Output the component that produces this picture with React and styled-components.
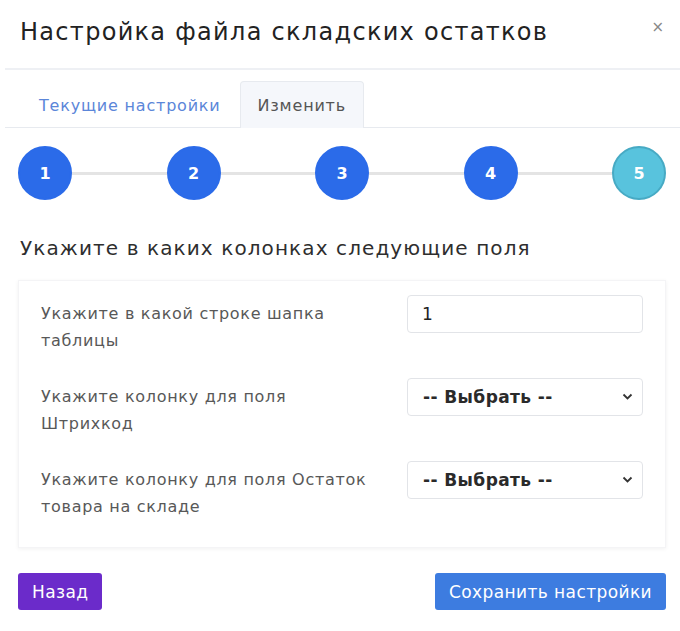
import React from "react";
import styled, { createGlobalStyle } from "styled-components";

const GlobalStyle = createGlobalStyle`
* {
  padding: 0;
  margin: 0;
  box-sizing: border-box;
}
body {
  background: #fff;
  font-family: "DejaVu Sans", "Noto Sans", sans-serif;
}
`;

const Modal = styled.div`
  width: 675px;
  margin-left: 5px;
  background: #fff;
`;

const Header = styled.div`
  display: flex;
  justify-content: space-between;
  align-items: flex-start;
  height: 70px;
  padding: 14px 16px 0 15px;
  border-bottom: 2px solid #eef0f4;
`;

const Title = styled.h1`
  font-size: 24px;
  font-weight: 400;
  letter-spacing: 1.3px;
  color: #222;
  line-height: 36px;
`;

const Close = styled.button`
  border: none;
  background: none;
  color: #888;
  font-size: 15px;
  line-height: 20px;
  margin-top: 3px;
  cursor: pointer;
  font-family: inherit;
`;

const Tabs = styled.div`
  display: flex;
  margin-top: 11px;
  padding-left: 15px;
  border-bottom: 1px solid #e7eaef;
`;

const Tab = styled.div`
  height: 47px;
  padding: 0 ${(p) => (p.active ? "17px" : "18px")};
  display: flex;
  align-items: center;
  font-size: 16px;
  letter-spacing: 0.8px;
  color: ${(p) => (p.active ? "#555" : "#5b86d9")};
  background: ${(p) => (p.active ? "#f5f7fb" : "transparent")};
  border: 1px solid ${(p) => (p.active ? "#e7eaef" : "transparent")};
  border-bottom: none;
  border-radius: 4px 4px 0 0;
  margin-bottom: -1px;
`;

const Stepper = styled.div`
  display: flex;
  align-items: center;
  margin-top: 18px;
  padding: 0 14px 0 13px;
`;

const Step = styled.div`
  width: 54px;
  height: 54px;
  flex-shrink: 0;
  border-radius: 50%;
  display: flex;
  align-items: center;
  justify-content: center;
  font-size: 16px;
  font-weight: 700;
  color: #fff;
  background: ${(p) => (p.current ? "#58c3dd" : "#2b6be9")};
  border: 2px solid ${(p) => (p.current ? "#47aac4" : "#2b6be9")};
`;

const Line = styled.div`
  flex: 1;
  height: 3px;
  background: #e4e4e4;
`;

const Heading = styled.h2`
  margin: 34px 0 0 15px;
  font-size: 20px;
  font-weight: 400;
  letter-spacing: 1.1px;
  color: #2e2e2e;
  line-height: 28px;
`;

const Card = styled.div`
  margin: 18px 14px 0 13px;
  padding: 14px 22px 27px 22px;
  background: #fff;
  box-shadow: 0 1px 4px rgba(0, 0, 0, 0.06);
  border: 1px solid #f4f4f6;
  display: flex;
  flex-direction: column;
  gap: 24px;
`;

const Row = styled.div`
  display: flex;
  justify-content: space-between;
  align-items: flex-start;
`;

const Label = styled.div`
  width: 335px;
  padding-top: 5px;
  font-size: 16px;
  letter-spacing: 0.7px;
  line-height: 27px;
  color: #585858;
`;

const Input = styled.input`
  width: 236px;
  height: 38px;
  border: 1px solid #e2e4e8;
  border-radius: 4px;
  padding: 0 14px;
  font-size: 17px;
  font-family: inherit;
  color: #222;
  font-weight: 500;
  outline: none;
`;

const SelectBox = styled.div`
  position: relative;
  width: 236px;
  height: 38px;
`;

const Select = styled.select`
  appearance: none;
  width: 100%;
  height: 100%;
  border: 1px solid #e2e4e8;
  border-radius: 4px;
  padding: 0 14px 0 15px;
  background: #fff;
  font-size: 17px;
  font-weight: 700;
  letter-spacing: 0.4px;
  font-family: inherit;
  color: #2a2a2a;
  outline: none;
`;

const Chevron = styled.svg`
  position: absolute;
  right: 10px;
  top: 15px;
  pointer-events: none;
`;

const Footer = styled.div`
  display: flex;
  justify-content: space-between;
  margin: 25px 14px 0 13px;
`;

const Button = styled.button`
  height: 37px;
  padding: 0 14px;
  border: none;
  border-radius: 3px;
  color: #fff;
  font-size: 17px;
  letter-spacing: 0.4px;
  font-family: inherit;
  background: ${(p) => p.color};
  cursor: pointer;
`;

const fields = [
  { label: "Укажите в какой строке шапка таблицы", input: true },
  { label: "Укажите колонку для поля Штрихкод" },
  { label: "Укажите колонку для поля Остаток товара на складе" },
];

export default function App() {
  return (
    <>
      <GlobalStyle />
      <Modal>
        <Header>
          <Title>Настройка файла складских остатков</Title>
          <Close>×</Close>
        </Header>
        <Tabs>
          <Tab>Текущие настройки</Tab>
          <Tab active>Изменить</Tab>
        </Tabs>
        <Stepper>
          {[1, 2, 3, 4, 5].map((n) => (
            <React.Fragment key={n}>
              <Step current={n === 5}>{n}</Step>
              {n < 5 && <Line />}
            </React.Fragment>
          ))}
        </Stepper>
        <Heading>Укажите в каких колонках следующие поля</Heading>
        <Card>
          {fields.map((f) => (
            <Row key={f.label}>
              <Label>{f.label}</Label>
              {f.input ? (
                <Input defaultValue="1" />
              ) : (
                <SelectBox>
                  <Select defaultValue="">
                    <option value="">-- Выбрать --</option>
                  </Select>
                  <Chevron width="11" height="8" viewBox="0 0 11 8">
                    <path d="M1.5 1.5 L5.5 5.5 L9.5 1.5" fill="none" stroke="#333" strokeWidth="1.8" />
                  </Chevron>
                </SelectBox>
              )}
            </Row>
          ))}
        </Card>
        <Footer>
          <Button color="#6b2bca">Назад</Button>
          <Button color="#3d7ce0">Сохранить настройки</Button>
        </Footer>
      </Modal>
    </>
  );
}
